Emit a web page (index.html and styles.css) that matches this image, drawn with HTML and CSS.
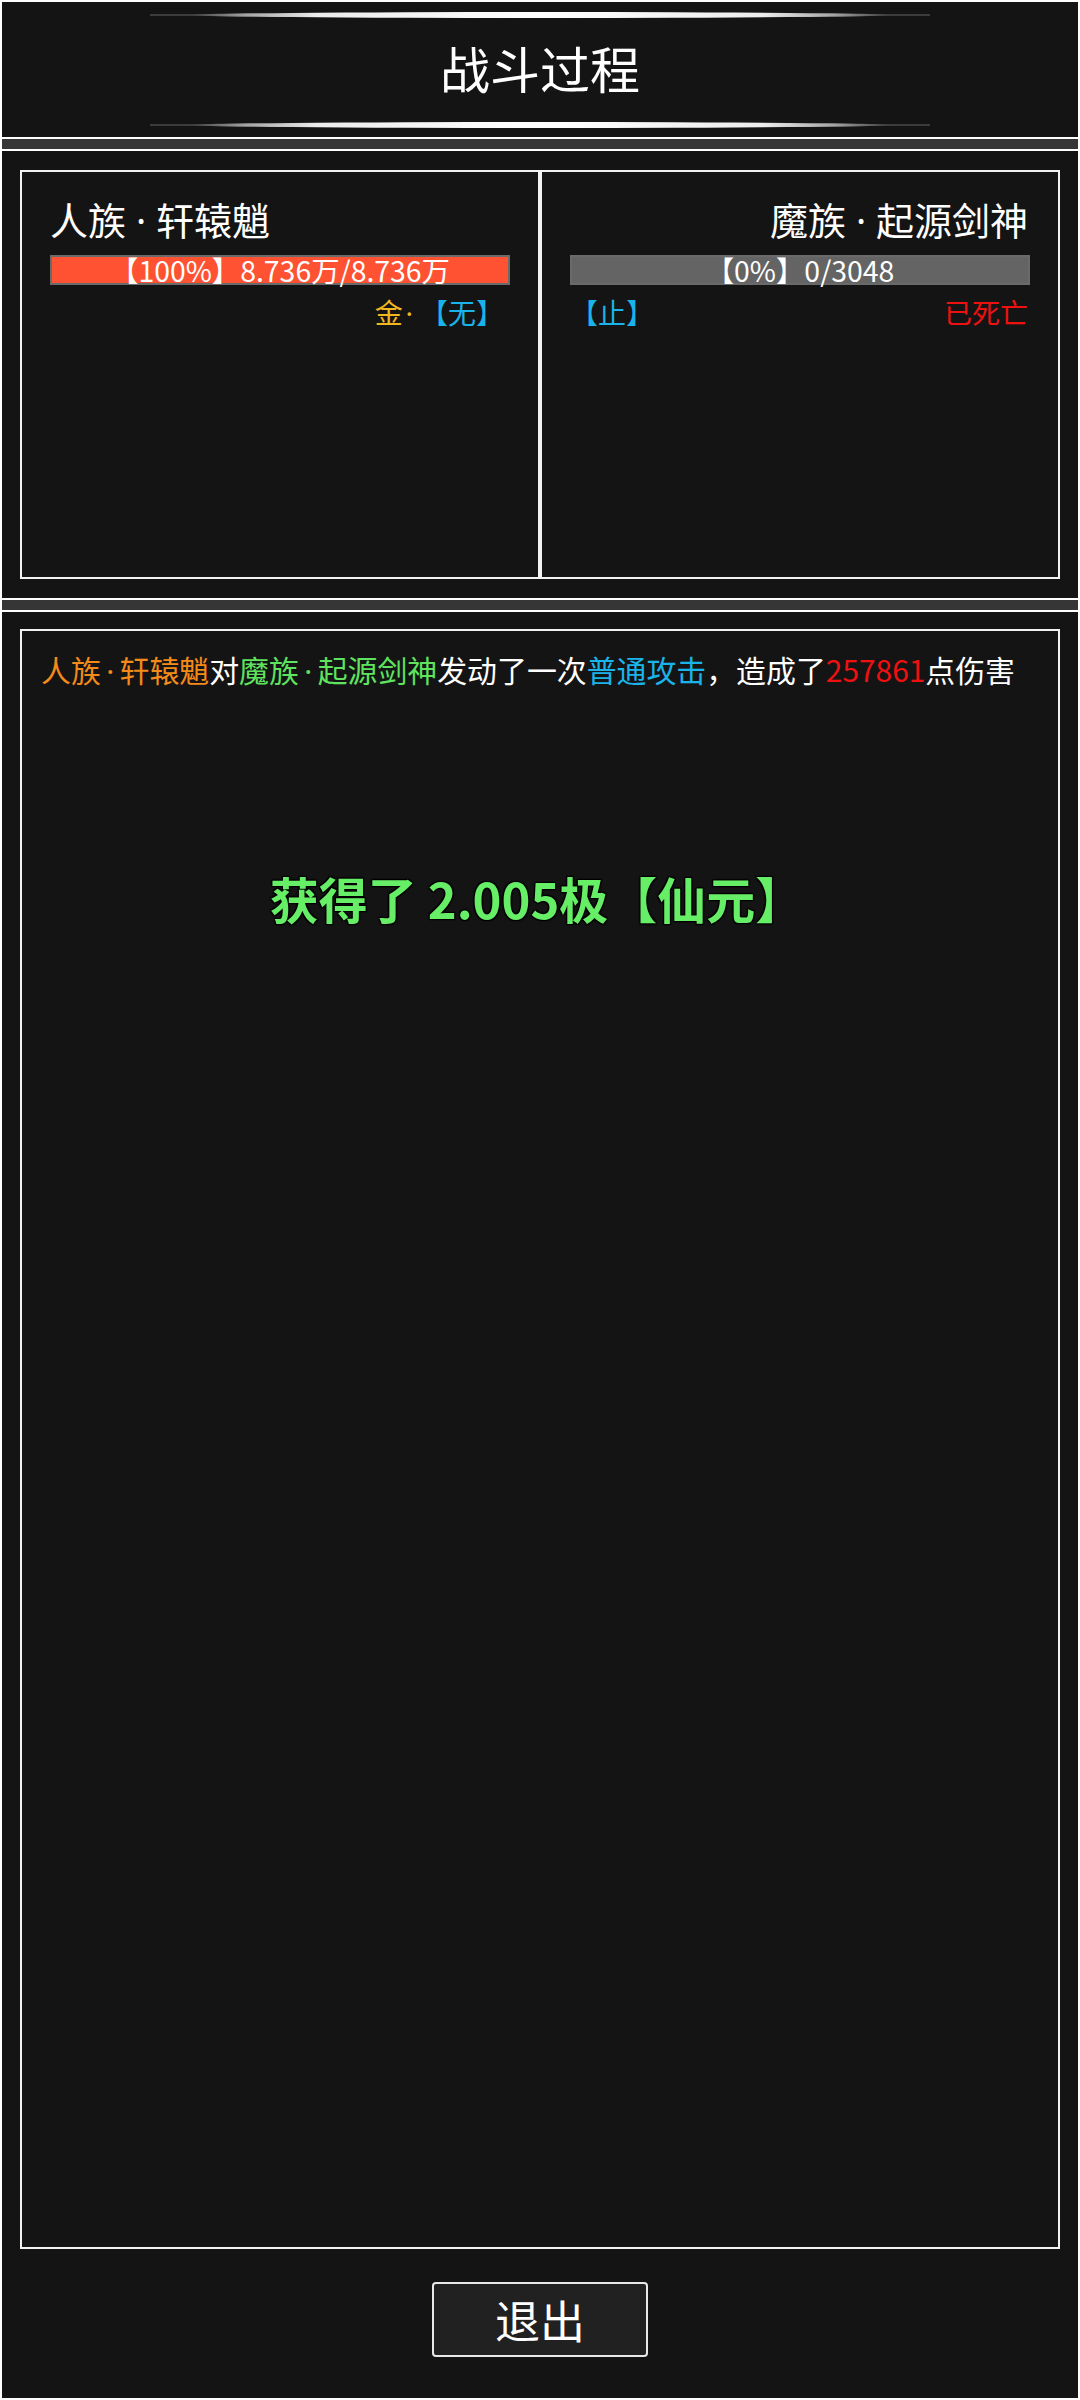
FILE: index.html
```html
<!DOCTYPE html>
<html lang="zh-CN">
<head>
<meta charset="utf-8">
<title>战斗过程</title>
<link rel="stylesheet" href="styles.css">
</head>
<body>
  <header class="header">
    <div class="deco"></div>
    <h1 class="title">战斗过程</h1>
    <div class="deco"></div>
  </header>
  <div class="sep"></div>
  <section class="fighters">
    <div class="fighter left">
      <div class="name">人族<span class="dot">·</span>轩辕魈</div>
      <div class="bar"><div class="fill" style="width:100%"></div><span class="bar-text">【100%】8.736万/8.736万</span></div>
      <div class="status status-right"><span class="gold">金<span class="dot">·</span></span><span class="cyan">【无】</span></div>
    </div>
    <div class="fighter right">
      <div class="name name-right">魔族<span class="dot">·</span>起源剑神</div>
      <div class="bar"><div class="fill" style="width:0%"></div><span class="bar-text">【0%】0/3048</span></div>
      <div class="status status-split"><span class="cyan">【止】</span><span class="red">已死亡</span></div>
    </div>
  </section>
  <div class="sep"></div>
  <section class="battle">
    <div class="log">
      <p class="log-line"><span class="orange">人族<span class="dot">·</span>轩辕魈</span>对<span class="green">魔族<span class="dot">·</span>起源剑神</span>发动了一次<span class="cyan">普通攻击</span>，造成了<span class="red">257861</span>点伤害</p>
      <div class="reward">获得了 2.005极【仙元】</div>
    </div>
    <button class="exit">退出</button>
  </section>
</body>
</html>
```
FILE: styles.css
```css
html, body {
  margin: 0;
  padding: 0;
}
body {
  width: 1080px;
  height: 2400px;
  box-sizing: border-box;
  padding: 2px;
  background: #ffffff;
  display: flex;
  flex-direction: column;
  gap: 2px;
  font-family: "Noto Sans CJK SC", "Noto Sans", sans-serif;
  color: #ffffff;
}
.dot {
  font-family: "Noto Sans", sans-serif;
  margin: 0 0.26em;
}
.header {
  height: 135px;
  background: #141414;
  display: flex;
  flex-direction: column;
  align-items: center;
  padding: 10px 0 9px;
  box-sizing: border-box;
}
.deco {
  position: relative;
  width: 780px;
  height: 6px;
  background: linear-gradient(180deg, transparent 2px, #3c3c3c 2px, #3c3c3c 4px, transparent 4px);
}
.deco::after {
  content: "";
  position: absolute;
  left: 40px;
  right: 40px;
  top: 0;
  bottom: 0;
  border-radius: 50%;
  background: linear-gradient(90deg, rgba(160,160,160,0) 0%, rgba(190,190,190,0.8) 8%, #ececec 18%, #ffffff 50%, #ececec 82%, rgba(190,190,190,0.8) 92%, rgba(160,160,160,0) 100%);
}
.title {
  flex: 1;
  margin: 0;
  padding-bottom: 7px;
  display: flex;
  align-items: center;
  justify-content: center;
  font-size: 50px;
  font-weight: 400;
  line-height: 1;
}
.sep {
  height: 10px;
  background: #363636;
  flex: none;
}
.fighters {
  height: 447px;
  background: #141414;
  box-sizing: border-box;
  padding: 19px 18px;
  display: flex;
  flex: none;
}
.fighter {
  flex: 1;
  border: 2px solid #f2f2f2;
  padding: 25px 28px 0;
  display: flex;
  flex-direction: column;
}
.name {
  font-size: 38px;
  line-height: 44px;
  white-space: nowrap;
}
.name-right {
  text-align: right;
  padding-right: 2px;
}
.bar {
  position: relative;
  margin-top: 13px;
  height: 30px;
  box-sizing: border-box;
  border: 2px solid #6a6a6a;
  background: #646464;
}
.fill {
  height: 100%;
  background: #ff5232;
}
.bar-text {
  position: absolute;
  left: 0;
  right: 0;
  top: -4px;
  text-align: center;
  font-size: 28.4px;
  line-height: 34px;
  white-space: nowrap;
}
.status {
  margin-top: 10px;
  font-size: 28px;
  line-height: 34px;
  display: flex;
}
.status .dot {
  margin: 0 0.25em 0 0.1em;
}
.status-right {
  justify-content: flex-end;
  padding-right: 6px;
}
.status-split {
  justify-content: space-between;
  padding-right: 2px;
}
.gold { color: #f0b81e; }
.cyan { color: #1ab4ea; }
.red { color: #ee1111; }
.orange { color: #f38a1a; }
.green { color: #5fe35f; }
.battle {
  flex: 1;
  background: #141414;
  box-sizing: border-box;
  padding: 17px 18px 0;
  display: flex;
  flex-direction: column;
  align-items: center;
}
.log {
  position: relative;
  align-self: stretch;
  height: 1620px;
  box-sizing: border-box;
  border: 2px solid #f2f2f2;
  padding: 19px 0 0 19px;
}
.log-line {
  margin: 0;
  font-size: 29.9px;
  line-height: 39px;
  white-space: nowrap;
}
.log-line .dot {
  margin: 0 0.18em;
}
.reward {
  position: absolute;
  left: 0;
  right: 0;
  top: 235px;
  text-align: center;
  font-size: 49px;
  line-height: 64px;
  font-weight: 700;
  color: #66ee66;
  text-shadow: 0 0 2px #000, 1px 1px 1px #000, -1px -1px 1px #000, 1px -1px 1px #000, -1px 1px 1px #000;
  padding-right: 6px;
}
.exit {
  margin-top: 33px;
  width: 216px;
  height: 75px;
  border: 2px solid #e8e8e8;
  border-radius: 4px;
  background: #212121;
  color: #ffffff;
  font-family: "Noto Sans CJK SC", "Noto Sans", sans-serif;
  font-size: 45px;
  line-height: 1;
  padding: 0;
}
```
